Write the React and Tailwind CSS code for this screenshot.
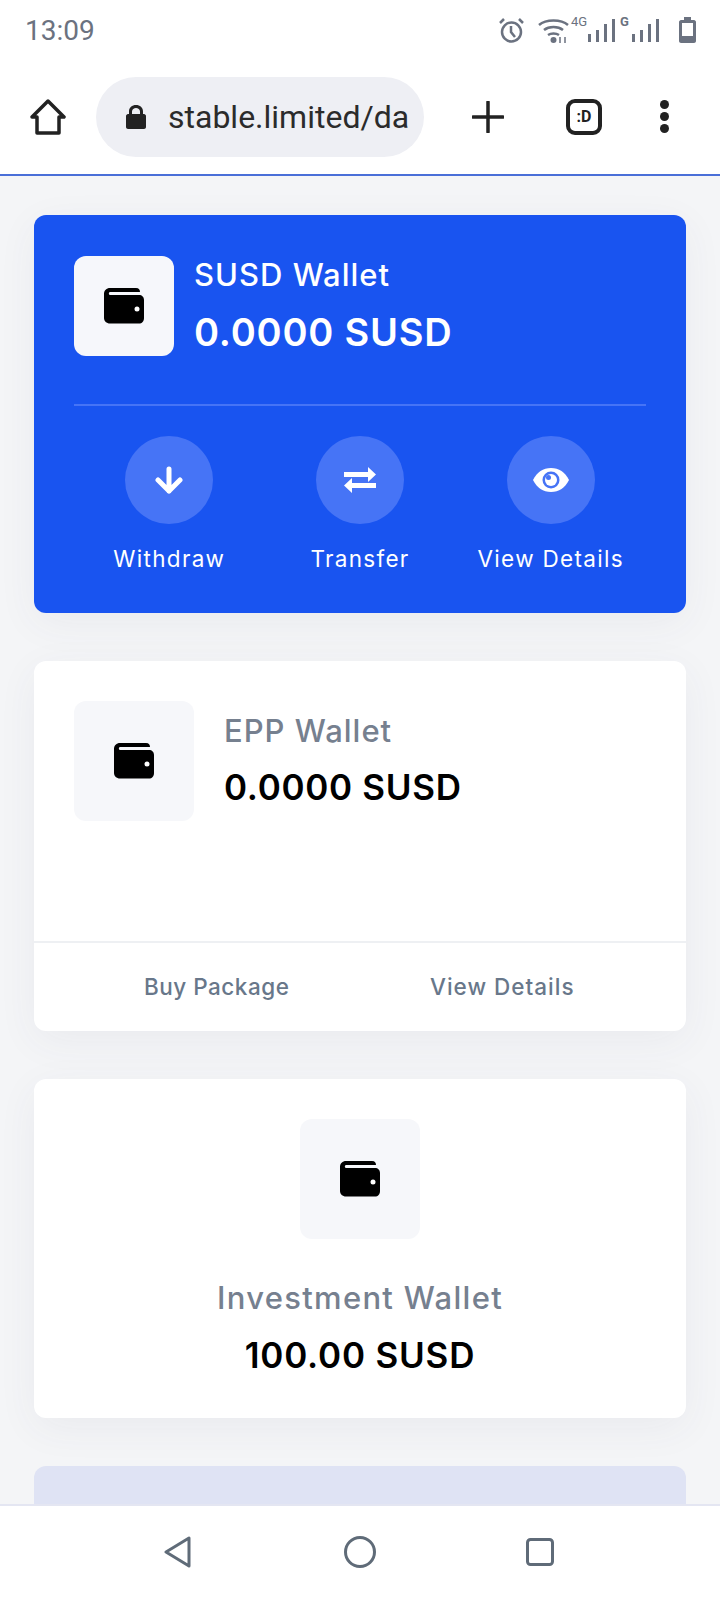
import React from "react";

const WalletIcon = () => (
  <svg width="40" height="36" viewBox="0 0 40 36" className="block">
    <path d="M6 0H32C35 0 36 2 36 4H6C4.500 4 4.500 7 6 7H35C38 7 40 9 40 12V30C40 33.500 38 35.500 35 35.500H6C2.500 35.500 0 33 0 30V6C0 2.500 2.500 0 6 0Z" fill="#000" />
    <circle cx="33" cy="21" r="2.500" fill="#fff" />
  </svg>
);

const ArrowIcon = () => (
  <svg width="28" height="28" viewBox="0 0 28 28" fill="none" stroke="#fff" strokeWidth="5" strokeLinecap="round" strokeLinejoin="round">
    <path d="M14 3V25M3 14L14 25L25 14" />
  </svg>
);

const TransferIcon = () => (
  <svg width="32" height="26" viewBox="0 0 32 26" fill="#fff">
    <path d="M0 5H24V0L32 7.500L24 15V10H0Z" />
    <path d="M32 16H8V11L0 18.500L8 26V21H32Z" />
  </svg>
);

const EyeIcon = () => (
  <svg width="36" height="24" viewBox="0 0 36 24">
    <path d="M0 12C4 4 10 0 18 0C26 0 32 4 36 12C32 20 26 24 18 24C10 24 4 20 0 12Z" fill="#fff" />
    <circle cx="18" cy="12" r="8.500" fill="#4674f6" />
    <circle cx="18" cy="12" r="6" fill="#fff" />
    <circle cx="15.500" cy="9.500" r="2.500" fill="#4674f6" />
  </svg>
);

const SignalBars = ({ className }) => (
  <svg width="28" height="24" viewBox="0 0 28 24" fill="currentColor" className={className}>
    <rect x="0" y="16" width="3" height="8" />
    <rect x="8" y="12" width="3" height="12" />
    <rect x="16" y="6" width="3" height="18" />
    <rect x="24" y="1" width="3" height="23" />
  </svg>
);

const StatusIcons = () => (
  <div className="flex items-start text-[#6b7280] h-[28px]">
    <svg width="25" height="26" viewBox="0 0 25 26" fill="none" stroke="currentColor" strokeWidth="2.500" className="mt-[2px]">
      <circle cx="12.500" cy="15" r="9.500" />
      <path d="M12 9V15L16 20M1 6L5 2M24 6L20 2" />
    </svg>
    <svg width="31" height="26" viewBox="0 0 31 26" fill="none" stroke="currentColor" strokeWidth="2.500" className="ml-[14px] mt-[2px]">
      <path d="M1 8C8 2 23 2 30 8M6 13C11 9 20 9 25 13M10 18C13 16 18 16 21 18" />
      <circle cx="15.500" cy="23" r="3" fill="currentColor" stroke="none" />
      <path d="M22 26V20M27 26V20" strokeWidth="1.500" />
    </svg>
    <span className="ml-[2px] w-[17px] text-[13px] leading-[13px] font-['Roboto',sans-serif]">4G</span>
    <SignalBars className="mt-[3px]" />
    <span className="ml-[4px] w-[12px] text-[13px] leading-[13px] font-bold font-['Roboto',sans-serif]">G</span>
    <SignalBars className="mt-[3px]" />
    <svg width="17" height="26" viewBox="0 0 17 26" fill="none" className="ml-[19px] mt-[2px]">
      <path d="M5 0H12V3H15C16 3 17 4 17 5V24C17 25 16 26 15 26H2C1 26 0 25 0 24V5C0 4 1 3 2 3H5Z" fill="currentColor" />
      <rect x="3" y="6" width="11" height="13" fill="#fff" />
    </svg>
  </div>
);

const ActionButton = ({ icon, label }) => (
  <div className="flex flex-col items-center w-[191px]">
    <div className="w-[88px] h-[88px] rounded-full bg-[#4674f6] flex items-center justify-center">
      {icon}
    </div>
    <span className="mt-[21px] text-[22.500px] leading-[28px] tracking-[1.3px] text-white whitespace-nowrap">{label}</span>
  </div>
);

export default function App() {
  return (
    <div className="h-[1600px] w-[720px] flex flex-col overflow-hidden bg-white font-['Inter',sans-serif]">
      {/* Status bar */}
      <div className="h-[65px] flex items-start justify-between pl-[25px] pr-[24px] pt-[15px]">
        <span className="text-[28px] leading-[32px] text-[#6b7280] font-['Roboto',sans-serif]">13:09</span>
        <StatusIcons />
      </div>

      {/* Browser toolbar */}
      <div className="h-[109px] flex items-center pb-[6px] pl-[30px]">
        <svg width="36" height="36" viewBox="0 0 36 36" fill="none" stroke="#222" strokeWidth="3.500" strokeLinejoin="round" strokeLinecap="round">
          <path d="M18 2L34 18H29V34H7V18H2Z" />
        </svg>
        <div className="ml-[30px] w-[328px] h-[80px] rounded-full bg-[#eeeff4] flex items-center pl-[30px]">
          <svg width="20" height="24" viewBox="0 0 20 24" fill="#222">
            <path d="M3 9V6.500C3 2.500 6 0 10 0C14 0 17 2.500 17 6.500V9H18C19 9 20 10 20 11V22C20 23 19 24 18 24H2C1 24 0 23 0 22V11C0 10 1 9 2 9ZM6 9H14V6.500C14 4.500 12 3 10 3C8 3 6 4.500 6 6.500Z" />
          </svg>
          <span className="ml-[22px] text-[32px] text-[#2b2b2b] font-['Roboto',sans-serif] whitespace-nowrap">stable.limited/da</span>
        </div>
        <svg width="32" height="32" viewBox="0 0 32 32" stroke="#222" strokeWidth="3.500" strokeLinecap="round" className="ml-[48px]">
          <path d="M16 1V31M1 16H31" />
        </svg>
        <div className="ml-[62px] w-[36px] h-[36px] rounded-[9px] border-[4px] border-[#222] flex items-center justify-center text-[16px] font-bold text-[#222] font-['Roboto',sans-serif]">
          :D
        </div>
        <div className="ml-[58px] flex flex-col gap-[3px]">
          <span className="w-[9px] h-[9px] rounded-full bg-[#222]" />
          <span className="w-[9px] h-[9px] rounded-full bg-[#222]" />
          <span className="w-[9px] h-[9px] rounded-full bg-[#222]" />
        </div>
      </div>

      {/* Page */}
      <div className="flex-1 min-h-0 overflow-hidden bg-[#f4f5f7] border-t-[2px] border-[#4a6fd8] px-[34px] pt-[39px]">
        {/* SUSD wallet */}
        <div className="h-[398px] rounded-[12px] bg-[#1954f0] px-[40px] pt-[41px] shadow-[0_10px_40px_rgba(60,70,110,0.06)]">
          <div className="flex h-[150px] border-b-[2px] border-[#4674f6]">
            <div className="w-[100px] h-[100px] rounded-[12px] bg-[#f6f7fb] flex items-center justify-center">
              <WalletIcon />
            </div>
            <div className="ml-[20px]">
              <div className="text-[31px] leading-[38px] tracking-[1px] font-medium text-white">SUSD Wallet</div>
              <div className="mt-[16px] text-[38px] leading-[44px] tracking-[0.8px] font-semibold text-white">0.0000 SUSD</div>
            </div>
          </div>
          <div className="flex mt-[30px]">
            <ActionButton icon={<ArrowIcon />} label="Withdraw" />
            <ActionButton icon={<TransferIcon />} label="Transfer" />
            <ActionButton icon={<EyeIcon />} label="View Details" />
          </div>
        </div>

        {/* EPP wallet */}
        <div className="mt-[48px] h-[370px] rounded-[12px] bg-white shadow-[0_10px_40px_rgba(60,70,110,0.06)]">
          <div className="h-[282px] flex px-[40px] pt-[40px] border-b-[2px] border-[#eef0f3]">
            <div className="w-[120px] h-[120px] rounded-[12px] bg-[#f6f7fa] flex items-center justify-center">
              <WalletIcon />
            </div>
            <div className="ml-[30px]">
              <div className="mt-[10px] text-[31px] leading-[40px] tracking-[1px] font-medium text-[#76808f]">EPP Wallet</div>
              <div className="mt-[16px] text-[35px] leading-[40px] tracking-[0.7px] font-semibold text-black">0.0000 SUSD</div>
            </div>
          </div>
          <div className="flex pt-[30px] pl-[110px] text-[22.500px] leading-[28px] font-medium text-[#68778a]">
            <span className="w-[286px] tracking-[0.5px]">Buy Package</span>
            <span className="tracking-[1px]">View Details</span>
          </div>
        </div>

        {/* Investment wallet */}
        <div className="mt-[48px] h-[339px] rounded-[12px] bg-white pt-[40px] flex flex-col items-center shadow-[0_10px_40px_rgba(60,70,110,0.06)]">
          <div className="w-[120px] h-[120px] rounded-[12px] bg-[#f6f7fa] flex items-center justify-center">
            <WalletIcon />
          </div>
          <div className="mt-[39px] text-[31px] leading-[40px] tracking-[1.3px] font-medium text-[#76808f]">Investment Wallet</div>
          <div className="mt-[17px] text-[35px] leading-[40px] tracking-[0.8px] font-semibold text-black">100.00 SUSD</div>
        </div>

        <div className="mt-[48px] h-[80px] rounded-[12px] bg-[#dfe3f4]" />
      </div>

      {/* Android nav bar */}
      <div className="h-[96px] shrink-0 bg-white border-t-[2px] border-[#e4e6f2] flex items-center justify-center">
        <div className="flex items-center gap-[150px] pb-[3px] pr-[2px]">
          <svg width="30" height="32" viewBox="0 0 30 32" fill="none" stroke="#5f6b78" strokeWidth="3" strokeLinejoin="round">
            <path d="M25 2V30L2 16Z" />
          </svg>
          <svg width="32" height="32" viewBox="0 0 32 32" fill="none" stroke="#5f6b78" strokeWidth="3">
            <circle cx="16" cy="16" r="14.500" />
          </svg>
          <svg width="28" height="28" viewBox="0 0 28 28" fill="none" stroke="#5f6b78" strokeWidth="3">
            <rect x="1.500" y="1.500" width="25" height="25" rx="3" />
          </svg>
        </div>
      </div>
    </div>
  );
}
